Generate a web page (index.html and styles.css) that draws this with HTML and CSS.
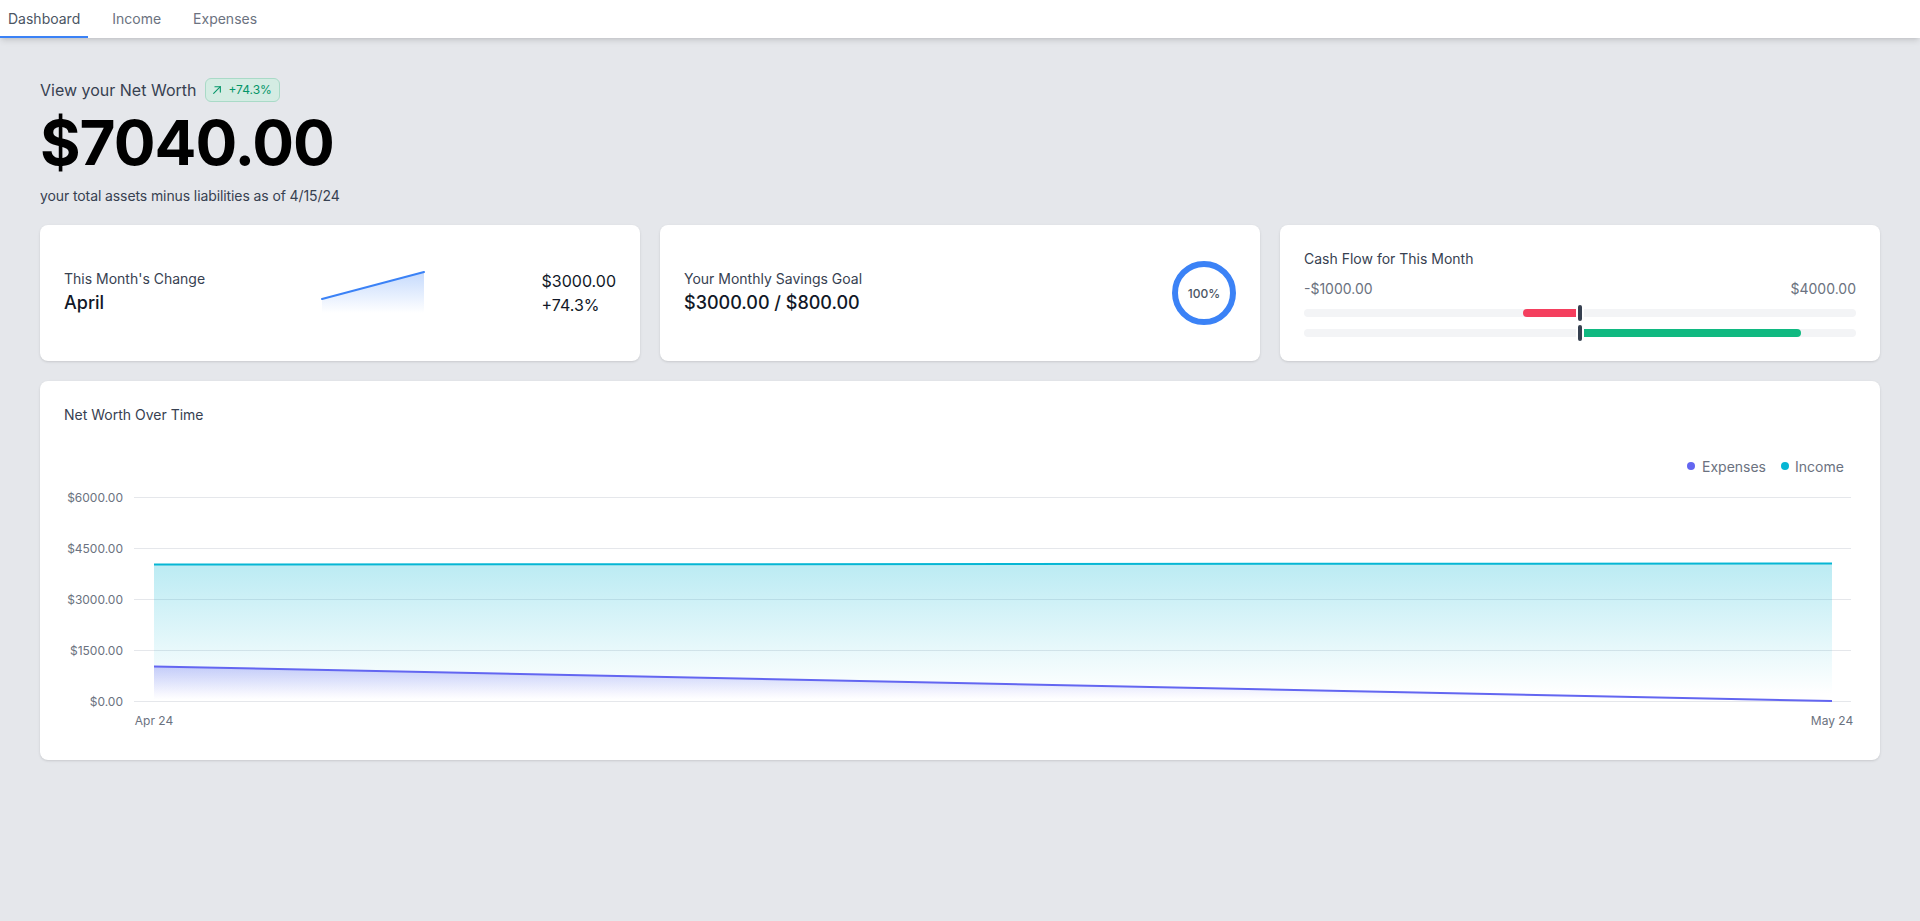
FILE: index.html
```html
<!DOCTYPE html>
<html lang="en">
<head>
<meta charset="utf-8">
<title>Dashboard</title>
<link rel="stylesheet" href="styles.css">
</head>
<body>
<nav class="tabs">
  <a class="tab active">Dashboard</a>
  <a class="tab">Income</a>
  <a class="tab">Expenses</a>
</nav>
<main class="page">
  <header class="hero">
    <div class="hero-head">
      <h1 class="hero-title">View your Net Worth</h1>
      <span class="badge">
        <svg class="badge-icon" width="12" height="12" viewBox="0 0 12 12" fill="none" stroke="currentColor" stroke-width="1.3" stroke-linecap="round" stroke-linejoin="round"><path d="M2 10 L10 2"/><path d="M3.5 2 H10 V8.5"/></svg>
        +74.3%
      </span>
    </div>
    <div class="hero-value">$7040.00</div>
    <p class="hero-sub">your total assets minus liabilities as of 4/15/24</p>
  </header>

  <section class="cards">
    <article class="card card-split">
      <div class="stat">
        <p class="stat-label">This Month's Change</p>
        <p class="stat-value">April</p>
      </div>
      <svg class="spark" width="104" height="48" viewBox="0 0 104 48">
        <defs>
          <linearGradient id="gSpark" x1="0" y1="0" x2="0" y2="1">
            <stop offset="5%" stop-color="#3b82f6" stop-opacity="0.28"/>
            <stop offset="95%" stop-color="#3b82f6" stop-opacity="0"/>
          </linearGradient>
        </defs>
        <path d="M1 30 L103 3 L103 46 L1 46 Z" fill="url(#gSpark)"/>
        <path d="M1 30 L103 3" stroke="#3b82f6" stroke-width="2" fill="none" stroke-linecap="round"/>
      </svg>
      <div class="change">
        <p>$3000.00</p>
        <p>+74.3%</p>
      </div>
    </article>

    <article class="card card-split">
      <div class="stat">
        <p class="stat-label">Your Monthly Savings Goal</p>
        <p class="stat-value">$3000.00 / $800.00</p>
      </div>
      <svg class="ring" width="64" height="64" viewBox="0 0 64 64">
        <circle cx="32" cy="32" r="29" fill="none" stroke="#3b82f6" stroke-width="6"/>
        <text x="32" y="32.5" class="ring-text">100%</text>
      </svg>
    </article>

    <article class="card">
      <p class="stat-label">Cash Flow for This Month</p>
      <div class="flow-labels">
        <span>-$1000.00</span>
        <span>$4000.00</span>
      </div>
      <div class="delta">
        <div class="delta-half neg"><div class="delta-fill red" style="width:20%"></div></div>
        <div class="delta-mark"></div>
        <div class="delta-half pos"></div>
      </div>
      <div class="delta second">
        <div class="delta-half neg"></div>
        <div class="delta-mark"></div>
        <div class="delta-half pos"><div class="delta-fill green" style="width:80%"></div></div>
      </div>
    </article>
  </section>

  <section class="card chart-card">
    <p class="stat-label">Net Worth Over Time</p>
    <svg class="chart" width="1792" height="311" viewBox="0 0 1792 311">
      <defs>
        <linearGradient id="gInc" x1="0" y1="0" x2="0" y2="1">
          <stop offset="5%" stop-color="#06b6d4" stop-opacity="0.26"/>
          <stop offset="95%" stop-color="#06b6d4" stop-opacity="0"/>
        </linearGradient>
        <linearGradient id="gExp" x1="0" y1="0" x2="0" y2="1">
          <stop offset="5%" stop-color="#6366f1" stop-opacity="0.3"/>
          <stop offset="95%" stop-color="#6366f1" stop-opacity="0"/>
        </linearGradient>
      </defs>
      <g class="legend">
        <circle cx="1627" cy="41" r="4" fill="#6366f1"/>
        <text x="1638" y="41">Expenses</text>
        <circle cx="1721" cy="41" r="4" fill="#06b6d4"/>
        <text x="1731" y="41">Income</text>
      </g>
      <g class="grid">
        <line x1="70" x2="1787" y1="72.5" y2="72.5"/>
        <line x1="70" x2="1787" y1="123.5" y2="123.5"/>
        <line x1="70" x2="1787" y1="174.5" y2="174.5"/>
        <line x1="70" x2="1787" y1="225.5" y2="225.5"/>
        <line x1="70" x2="1787" y1="276.5" y2="276.5"/>
      </g>
      <g class="axis ylab">
        <text x="59" y="72">$6000.00</text>
        <text x="59" y="123">$4500.00</text>
        <text x="59" y="174">$3000.00</text>
        <text x="59" y="225">$1500.00</text>
        <text x="59" y="276">$0.00</text>
      </g>
      <g class="axis xlab">
        <text x="90" y="295">Apr 24</text>
        <text x="1768" y="295">May 24</text>
      </g>
      <path d="M90 139.5 L1768 138.5 L1768 276 L90 276 Z" fill="url(#gInc)"/>
      <path d="M90 139.5 L1768 138.5" stroke="#06b6d4" stroke-width="2" fill="none"/>
      <path d="M90 241.5 L1768 276 L90 276 Z" fill="url(#gExp)"/>
      <path d="M90 241.5 L1768 276" stroke="#6366f1" stroke-width="2" fill="none"/>
    </svg>
  </section>
</main>
</body>
</html>
```

FILE: styles.css
```css
* {
  box-sizing: border-box;
}

body {
  margin: 0;
  background: #e5e7eb;
  font-family: Inter, "Noto Sans", "Liberation Sans", sans-serif;
  color: #111827;
}

p, h1 {
  margin: 0;
}

/* top tabs */
.tabs {
  display: flex;
  gap: 16px;
  height: 38px;
  background: #ffffff;
  box-shadow: 0 4px 6px -1px rgba(0, 0, 0, 0.1), 0 2px 4px -2px rgba(0, 0, 0, 0.1);
}

.tab {
  padding: 9px 8px 7px;
  font-size: 14px;
  line-height: 20px;
  color: #6b7280;
  border-bottom: 2px solid transparent;
  cursor: pointer;
}

.tab.active {
  color: #4b5563;
  border-bottom-color: #3b82f6;
}

/* page */
.page {
  padding: 38px 40px 40px;
}

.hero-head {
  display: flex;
  align-items: center;
  gap: 9px;
  height: 28px;
}

.hero-title {
  font-size: 16px;
  line-height: 28px;
  font-weight: 400;
  color: #374151;
}

.badge {
  display: inline-flex;
  align-items: center;
  gap: 6px;
  height: 24px;
  padding: 0 7px 0 6px;
  border-radius: 6px;
  background: #d4ece3;
  border: 1px solid #a9dac7;
  color: #059669;
  font-size: 12px;
  line-height: 16px;
}

.badge-icon {
  display: block;
  width: 10px;
  height: 10px;
}

.hero-value {
  margin-top: 7px;
  font-size: 62px;
  line-height: 64px;
  font-weight: 700;
  letter-spacing: -1px;
  color: #000000;
}

.hero-sub {
  margin-top: 11px;
  font-size: 14px;
  line-height: 20px;
  letter-spacing: -0.1px;
  color: #374151;
}

/* cards */
.cards {
  display: grid;
  grid-template-columns: repeat(3, 1fr);
  gap: 20px;
  margin-top: 19px;
}

.card {
  background: #ffffff;
  border-radius: 8px;
  padding: 24px;
  box-shadow: 0 1px 3px 0 rgba(0, 0, 0, 0.1), 0 1px 2px -1px rgba(0, 0, 0, 0.1);
}

.card-split {
  display: flex;
  align-items: center;
  justify-content: space-between;
}

.stat-label {
  font-size: 14px;
  line-height: 20px;
  color: #374151;
}

.stat-value {
  font-size: 18px;
  line-height: 28px;
  font-weight: 500;
  color: #111827;
}

.spark {
  display: block;
}

.change p {
  font-size: 16px;
  line-height: 24px;
  color: #111827;
}

.ring {
  display: block;
}

.ring-text {
  font-size: 12px;
  font-weight: 500;
  fill: #4b5563;
  text-anchor: middle;
  dominant-baseline: central;
}

/* cash flow */
.flow-labels {
  display: flex;
  justify-content: space-between;
  margin-top: 8px;
  font-size: 14px;
  line-height: 24px;
  color: #6b7280;
}

.delta {
  display: flex;
  align-items: center;
  height: 8px;
  margin-top: 8px;
  border-radius: 9999px;
  background: #f3f4f6;
}

.delta.second {
  margin-top: 12px;
}

.delta-half {
  display: flex;
  flex: 1;
  height: 100%;
}

.delta-half.neg {
  justify-content: flex-end;
}

.delta-half.pos {
  justify-content: flex-start;
}

.delta-fill {
  height: 100%;
}

.delta-fill.red {
  background: #f43f5e;
  border-radius: 9999px 0 0 9999px;
}

.delta-fill.green {
  background: #10b981;
  border-radius: 0 9999px 9999px 0;
}

.delta-mark {
  position: relative;
  z-index: 1;
  width: 4px;
  height: 16px;
  border-radius: 9999px;
  background: #374151;
  box-shadow: 0 0 0 2px #ffffff;
}

/* chart */
.chart-card {
  margin-top: 20px;
}

.chart {
  display: block;
}

.chart text {
  font-family: Inter, "Noto Sans", "Liberation Sans", sans-serif;
}

.legend text {
  font-size: 14px;
  fill: #6b7280;
  dominant-baseline: central;
}

.grid line {
  stroke: #e5e7eb;
  stroke-width: 1;
}

.axis text {
  font-size: 12px;
  fill: #6b7280;
  dominant-baseline: central;
}

.ylab text {
  text-anchor: end;
}

.xlab text {
  text-anchor: middle;
}
```
